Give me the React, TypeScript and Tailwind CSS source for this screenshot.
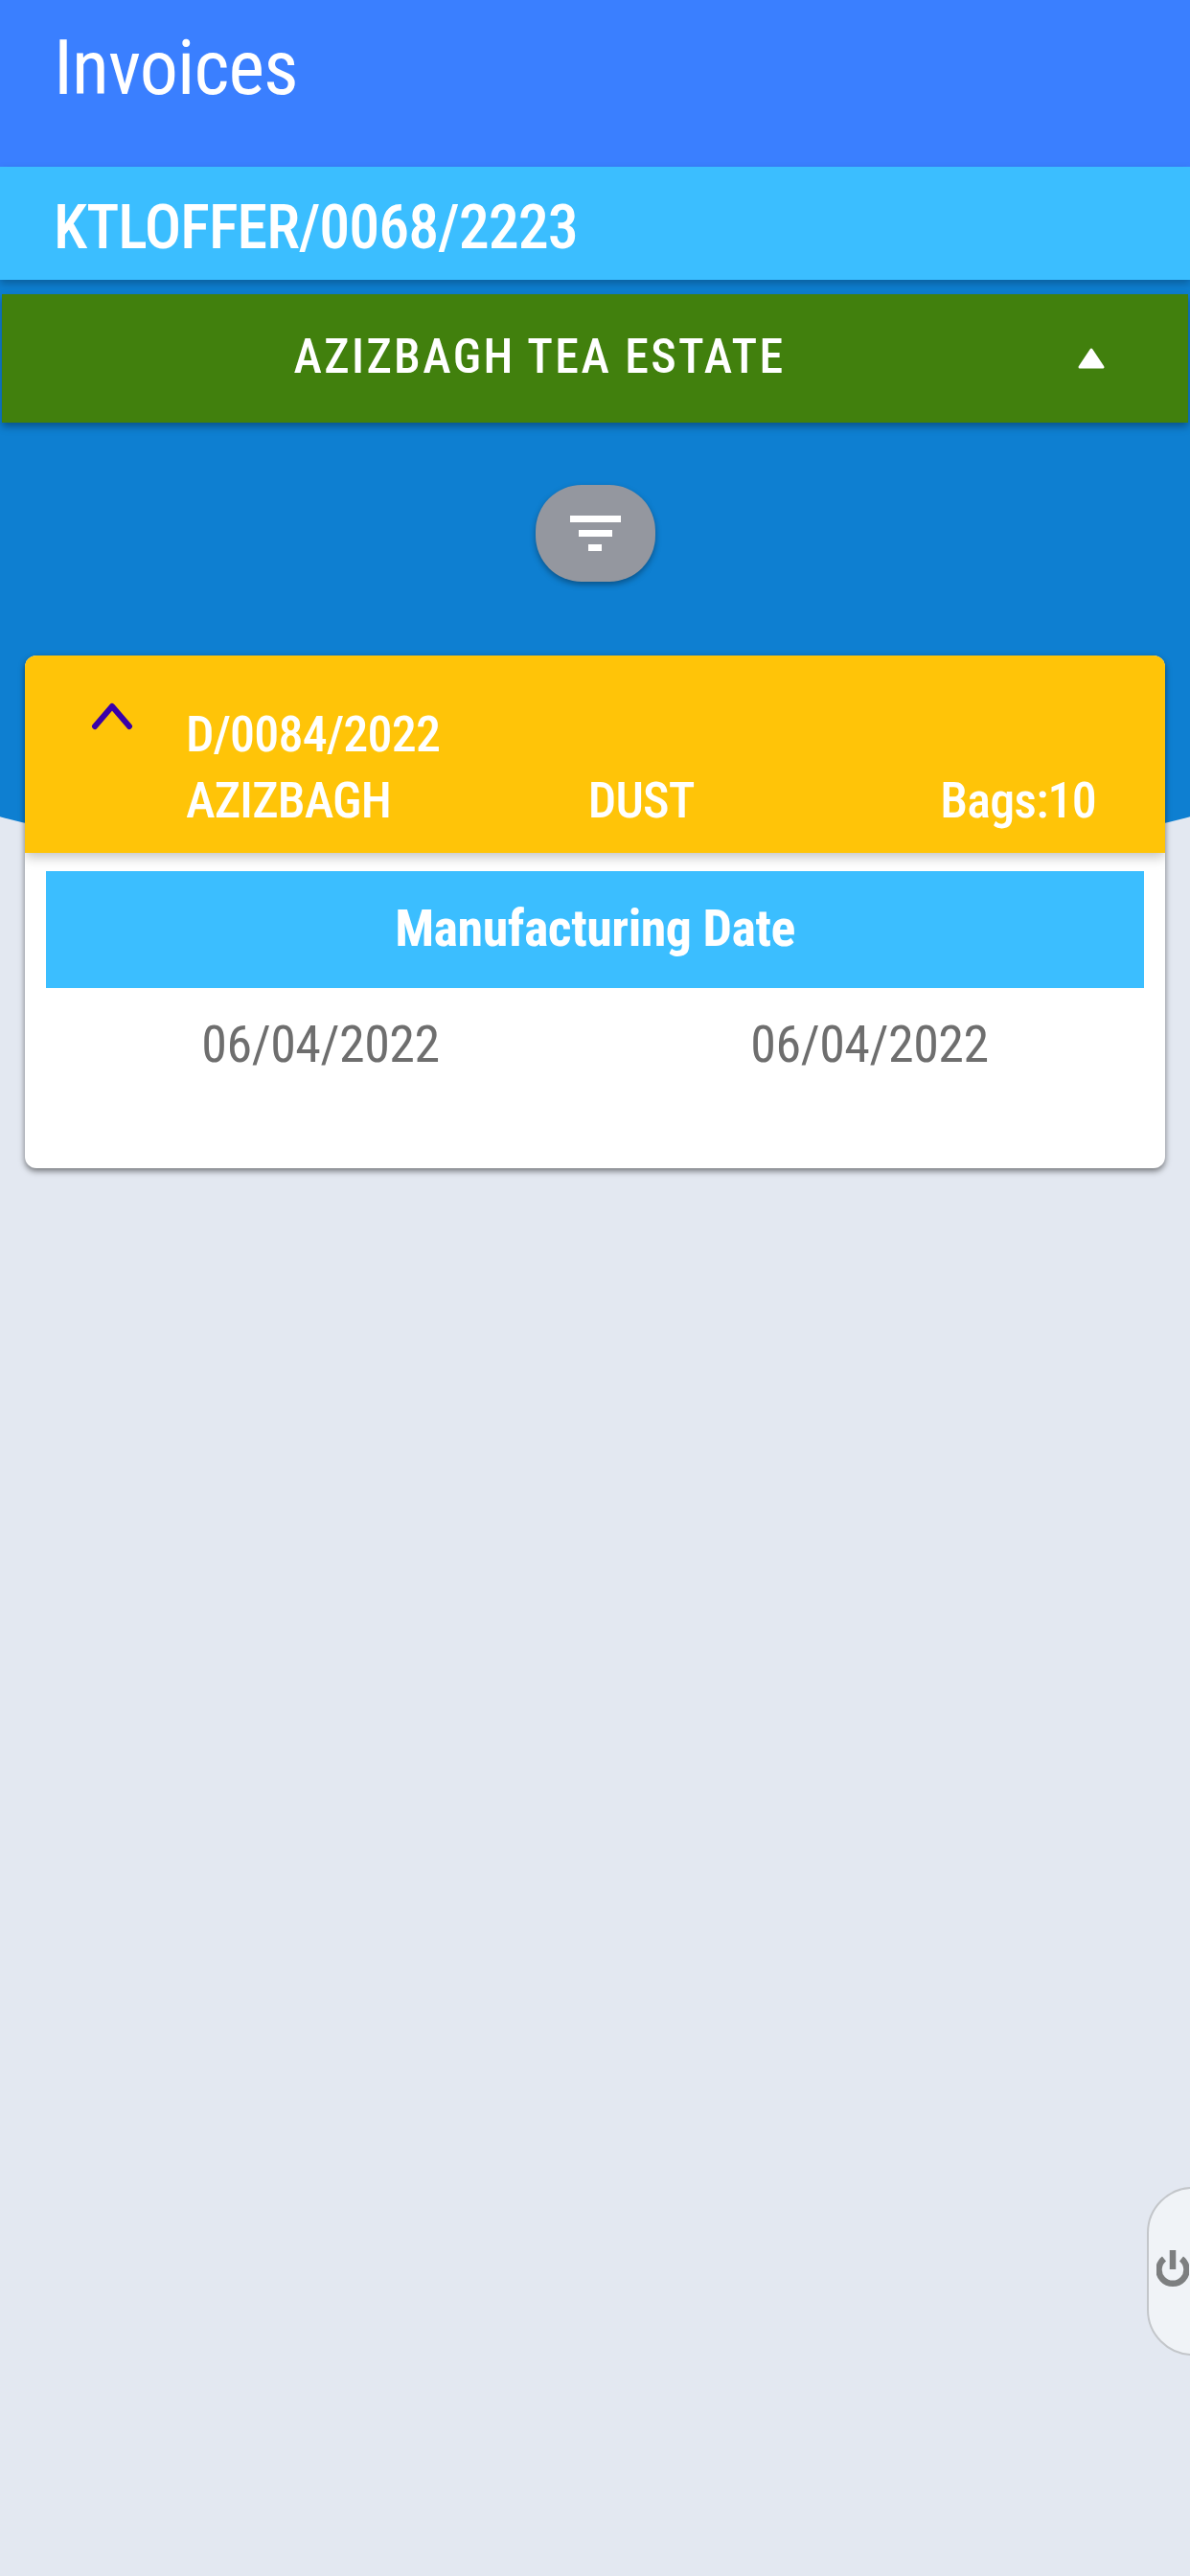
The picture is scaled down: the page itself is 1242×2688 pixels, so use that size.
const label = "font-['Roboto_Condensed','Liberation_Sans_Narrow',Roboto,sans-serif]";

export default function App() {
  return (
    <div className={`relative min-h-[2688px] overflow-hidden bg-[#e3e8f1] ${label}`}>
      {/* blue backdrop behind the top of the list */}
      <div className="absolute left-[-79px] top-0 h-[906px] w-[1400px] rounded-b-[700px_100px] bg-[#0e7fd1]" />

      <div className="relative">
        <header className="flex h-[174px] items-start bg-[#3a7fff] pl-[56px] pt-[24px]">
          <h1 className="text-[80px] leading-[94px] tracking-[-0.9px] text-white">Invoices</h1>
        </header>
        <div className="flex h-[118px] items-center bg-[#3bbeff] pl-[56px] pt-[10px] shadow-[0_4px_8px_rgba(0,0,0,0.25)]">
          <span className="text-[64px] font-medium leading-none tracking-[-1px] text-white">KTLOFFER/0068/2223</span>
        </div>

        <div className="mx-[2px] mt-[15px] flex h-[134px] items-center bg-[#41800d] shadow-[0_4px_8px_rgba(0,0,0,0.35)]">
          <span className="w-[1122px] pb-[4px] text-center text-[50px] font-medium tracking-[2.4px] text-white">AZIZBAGH TEA ESTATE</span>
          <svg className="h-[24px] w-[30px]" viewBox="0 0 30 24">
            <path d="M15 3 L27 21 H3 Z" fill="#fff" stroke="#fff" strokeWidth="3" strokeLinejoin="round" />
          </svg>
        </div>

        <div className="mt-[65px] flex justify-center">
          <div className="flex h-[101px] w-[125px] flex-col items-center justify-center gap-[8px] rounded-[48px] bg-[#94979f] shadow-[0_3px_6px_rgba(0,0,0,0.35)]">
            <div className="h-[7px] w-[53px] bg-white" />
            <div className="h-[7px] w-[35px] bg-white" />
            <div className="h-[7px] w-[14px] bg-white" />
          </div>
        </div>

        <div className="mx-[26px] mt-[77px] h-[535px] overflow-hidden rounded-[12px] bg-white shadow-[0_3px_6px_rgba(0,0,0,0.5)]">
          <div className="flex h-[206px] bg-[#ffc408] shadow-[0_4px_12px_rgba(0,0,0,0.25)]">
            <div className="w-[70px] pl-[69px] pt-[47px]">
              <svg className="h-[32px] w-[44px]" viewBox="0 0 44 32" fill="none">
                <path d="M4 27 L22 6 L40 27" stroke="#3a00a8" strokeWidth="6" strokeLinecap="round" strokeLinejoin="round" />
              </svg>
            </div>
            <div className="ml-[98px] flex-1 pr-[72px] pt-[54px] text-[52px] font-medium leading-[58px] tracking-[-0.8px] text-white">
              <div>D/0084/2022</div>
              <div className="mt-[11px] flex justify-between">
                <span>AZIZBAGH</span>
                <span className="mr-[51px]">DUST</span>
                <span>Bags:10</span>
              </div>
            </div>
          </div>
          <div className="mx-[22px] mt-[19px] flex h-[122px] items-center justify-center bg-[#3bbeff] pb-[4px] text-[54px] font-bold tracking-[-0.5px] text-white">
            Manufacturing Date
          </div>
          <div className="mx-[22px] mt-[28px] grid grid-cols-2 text-center text-[54px] leading-[62px] tracking-[-0.5px] text-[#6e6e6e]">
            <span>06/04/2022</span>
            <span>06/04/2022</span>
          </div>
        </div>
      </div>

      {/* logout tab on the right edge */}
      <div className="absolute left-[1197px] top-[2282px] flex h-[176px] w-[100px] rounded-[48px] border-2 border-[#c3c6ca] bg-[#f0f3f7] pl-[8px] pt-[64px]">
        <svg className="h-[42px] w-[34px]" viewBox="0 0 34 42" fill="none" stroke="#7d7f80" strokeWidth="6.5">
          <path d="M17 0 V20" />
          <path d="M8 9 A14.5 14.5 0 1 0 26 9" />
        </svg>
      </div>
    </div>
  );
}
